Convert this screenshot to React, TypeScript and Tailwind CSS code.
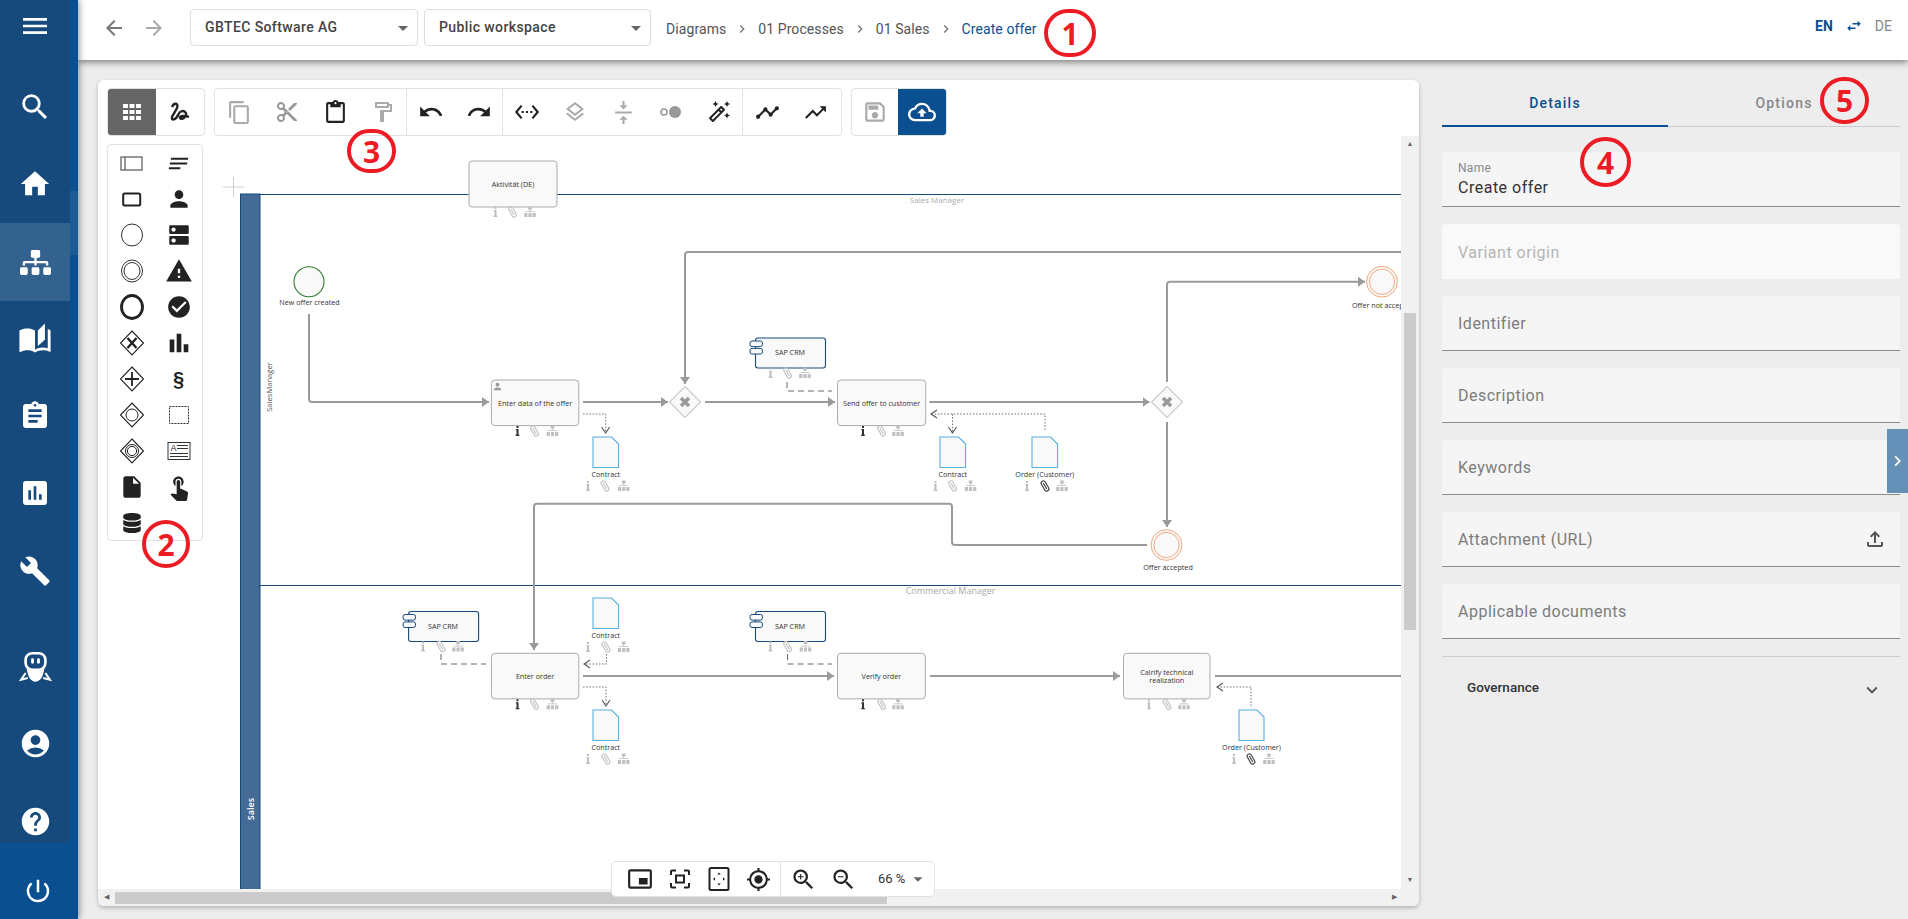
import type { ReactNode } from "react"
import {
  MdAccountCircle,
  MdArrowBack,
  MdArrowDropDown,
  MdArrowForward,
  MdAssessment,
  MdAssignment,
  MdAutoStories,
  MdBarChart,
  MdBuild,
  MdCheckCircle,
  MdChevronRight,
  MdContentCopy,
  MdContentCut,
  MdDns,
  MdExpandMore,
  MdHelp,
  MdHome,
  MdInsertDriveFile,
  MdMenu,
  MdMyLocation,
  MdNotes,
  MdOutlineAutoFixHigh,
  MdOutlineCloudUpload,
  MdOutlineContentPaste,
  MdOutlineFileUpload,
  MdOutlineFormatPaint,
  MdOutlineLayers,
  MdOutlineSave,
  MdPerson,
  MdPictureInPictureAlt,
  MdPowerSettingsNew,
  MdRedo,
  MdSearch,
  MdSettingsEthernet,
  MdSwapHoriz,
  MdTimeline,
  MdTouchApp,
  MdTrendingUp,
  MdUndo,
  MdVerticalAlignCenter,
  MdWarning,
  MdZoomIn,
  MdZoomOut,
} from "react-icons/md"
import { FaDatabase, FaSitemap } from "react-icons/fa"

const GRAY = "#9a9a9a"
const NAVY = "#174a7c"
const DOC = "#5aaee0"
const LABEL = "#333333"

function RobotIcon() {
  return (
    <svg width="33" height="33" viewBox="0 0 30 30" fill="none">
      <rect x="6" y="2" width="18" height="15" rx="6" stroke="white" strokeWidth="2.4" />
      <rect x="11" y="6.500" width="2.6" height="5" rx="1.2" fill="white" />
      <rect x="16.4" y="6.500" width="2.6" height="5" rx="1.2" fill="white" />
      <path d="M7 16 C8 24 11 28 15 28 C19 28 22 24 23 16 C20 19 10 19 7 16Z" fill="white" />
      <path d="M6 20 L2 26 L8 24.5M24 20 L28 26 L22 24.5" stroke="white" strokeWidth="1.8" />
    </svg>
  )
}

function TogglePair() {
  return (
    <svg width="26" height="24" viewBox="0 0 26 24">
      <circle cx="6" cy="12" r="3" fill="none" stroke="#999" strokeWidth="1.6" />
      <circle cx="17" cy="12" r="6" fill="#999" />
    </svg>
  )
}

function FitSelection() {
  return (
    <svg width="24" height="24" viewBox="0 0 24 24" fill="none" stroke="#222" strokeWidth="2">
      <path d="M3 8V4.500Q3 3.500 4 3.500H8M16 3.500H20Q21 3.500 21 4.500V8M21 16V19.500Q21 20.500 20 20.500H16M8 20.500H4Q3 20.500 3 19.500V16" />
      <rect x="8" y="8.500" width="8" height="7" />
    </svg>
  )
}

function FitPage() {
  return (
    <svg width="24" height="26" viewBox="0 0 24 26" fill="none">
      <rect x="2.500" y="2" width="19" height="22" rx="1.5" stroke="#222" strokeWidth="2" />
      <path d="M12 6.500L13.800 8.500H10.200ZM12 19.500L13.800 17.500H10.200ZM6 13L8 11.200V14.800ZM18 13L16 11.200V14.800Z" fill="#222" />
    </svg>
  )
}

function PaletteGlyph({ children }: { children: ReactNode }) {
  return (
    <svg width="26" height="30" viewBox="0 0 26 30" fill="none" stroke="#222">
      {children}
    </svg>
  )
}

const diamond = "M13 3 L24.5 15 L13 27 L1.5 15Z"

const paletteItems: ReactNode[] = [
  <svg key="pool" width="23" height="15" viewBox="0 0 23 15" fill="none">
    <rect x="1" y="1" width="21" height="13" stroke="#555" strokeWidth="1.2" />
    <path d="M5 1V14" stroke="#555" strokeWidth="1.2" />
  </svg>,
  <MdNotes key="notes" size={23} color="#222" className="-skew-x-12" />,
  <svg key="task" width="20" height="15" viewBox="0 0 20 15" fill="none">
    <rect x="1.2" y="1.5" width="17" height="12" rx="1.5" stroke="#222" strokeWidth="2" />
  </svg>,
  <MdPerson key="person" size={26} color="#222" />,
  <svg key="start" width="24" height="26" viewBox="0 0 24 26" fill="none">
    <ellipse cx="12" cy="13" rx="10.5" ry="11" stroke="#333" strokeWidth="1" />
  </svg>,
  <MdDns key="dns" size={26} color="#222" />,
  <svg key="inter" width="24" height="26" viewBox="0 0 24 26" fill="none">
    <ellipse cx="12" cy="13" rx="10.5" ry="11" stroke="#333" strokeWidth="1" />
    <ellipse cx="12" cy="13" rx="8" ry="8.5" stroke="#333" strokeWidth="1" />
  </svg>,
  <MdWarning key="warn" size={28} color="#222" />,
  <svg key="end" width="26" height="28" viewBox="0 0 26 28" fill="none">
    <ellipse cx="13" cy="14" rx="10.5" ry="11.5" stroke="#222" strokeWidth="2.8" />
  </svg>,
  <MdCheckCircle key="check" size={26} color="#222" />,
  <PaletteGlyph key="gw-x">
    <path d={diamond} strokeWidth="1.1" />
    <path d="M8.500 10 L17.500 20M17.500 10 L8.500 20" strokeWidth="2.4" />
  </PaletteGlyph>,
  <MdBarChart key="bars" size={28} color="#222" />,
  <PaletteGlyph key="gw-plus">
    <path d={diamond} strokeWidth="1.1" />
    <path d="M13 8V22M6 15H20" strokeWidth="1.8" />
  </PaletteGlyph>,
  <span key="para" className="font-['Liberation_Sans',sans-serif] text-[20px] font-bold text-[#222]">
    §
  </span>,
  <PaletteGlyph key="gw-o">
    <path d={diamond} strokeWidth="1.1" />
    <circle cx="13" cy="15" r="6" strokeWidth="1" />
  </PaletteGlyph>,
  <svg key="group" width="22" height="20" viewBox="0 0 22 20" fill="none">
    <rect x="1.5" y="1.5" width="19" height="17" stroke="#333" strokeWidth="1" strokeDasharray="2 1" />
  </svg>,
  <PaletteGlyph key="gw-oo">
    <path d={diamond} strokeWidth="1.1" />
    <circle cx="13" cy="15" r="6.5" strokeWidth="1" />
    <circle cx="13" cy="15" r="4.6" strokeWidth="1" />
  </PaletteGlyph>,
  <svg key="text" width="24" height="20" viewBox="0 0 24 20" fill="none">
    <rect x="1" y="1.5" width="22" height="17" stroke="#333" strokeWidth="1" />
    <text x="3.5" y="10" fontSize="9" fill="#222" fontFamily="Liberation Sans, sans-serif">
      A
    </text>
    <path d="M10 4.5H21M10 7.5H21M3 12.5H21M3 15.5H21" stroke="#333" strokeWidth="1" />
  </svg>,
  <MdInsertDriveFile key="file" size={26} color="#222" />,
  <MdTouchApp key="touch" size={28} color="#222" />,
  <FaDatabase key="db" size={20} color="#222" />,
]

type ToolProps = { icon: ReactNode; sep?: boolean }

function Tool({ icon, sep }: ToolProps) {
  return (
    <div className={`w-[48px] h-full flex items-center justify-center ${sep ? "border-r border-[#e2e2e2]" : ""}`}>
      {icon}
    </div>
  )
}

function Arrow({ id, color, open }: { id: string; color: string; open?: boolean }) {
  return (
    <marker id={id} markerUnits="userSpaceOnUse" markerWidth="12" markerHeight="12" refX="7" refY="5" orient="auto">
      {open ? (
        <path d="M1 1 L7 5 L1 9" fill="none" stroke={color} strokeWidth="1.1" />
      ) : (
        <path d="M0 0 L7 5 L0 10Z" fill={color} />
      )}
    </marker>
  )
}

function Mini({ x, y, dark }: { x: number; y: number; dark?: boolean }) {
  // clip-style glyph under a node
  return (
    <g transform={`translate(${x} ${y}) rotate(-30)`} fill="none" stroke={dark ? "#444" : "#c4c4c4"} strokeWidth="1.2">
      <rect x="-2.2" y="-5.5" width="4.4" height="11" rx="2.2" />
      <path d="M0 -3.500V3.500" />
    </g>
  )
}

function InfoGlyph({ x, y, dark }: { x: number; y: number; dark?: boolean }) {
  const c = dark ? "#333" : "#bdbdbd"
  return (
    <g fill={c}>
      <rect x={x - 1} y={y - 5} width="2" height="2" />
      <path d={`M${x - 1.6} ${y - 2}H${x + 1}V${y + 3.6}H${x + 1.8}V${y + 5}H${x - 1.8}V${y + 3.6}H${x - 1}V${y - 0.8}H${x - 1.6}Z`} />
    </g>
  )
}

function TreeGlyph({ x, y }: { x: number; y: number }) {
  return (
    <g fill="#c0c0c0">
      <rect x={x - 1.8} y={y - 5.5} width="3.6" height="3.2" />
      <rect x={x - 0.4} y={y - 2.5} width="0.8" height="2" />
      <rect x={x - 4.6} y={y - 0.8} width="9.2" height="0.8" />
      <rect x={x - 5.8} y={y + 1} width="3.2" height="4" />
      <rect x={x - 1.6} y={y + 1} width="3.2" height="4" />
      <rect x={x + 2.6} y={y + 1} width="3.2" height="4" />
    </g>
  )
}

function Minis({ a, b, c, y, infoDark, clipDark }: { a: number; b: number; c: number; y: number; infoDark?: boolean; clipDark?: boolean }) {
  return (
    <g>
      <InfoGlyph x={a} y={y} dark={infoDark} />
      <Mini x={b} y={y} dark={clipDark} />
      <TreeGlyph x={c} y={y} />
    </g>
  )
}

function Label({ x, y, children, size = 7.2, color = LABEL }: { x: number; y: number; children: string; size?: number; color?: string }) {
  return (
    <text x={x} y={y} fontSize={size} fill={color} textAnchor="middle" dominantBaseline="central" fontFamily="Open Sans, sans-serif">
      {children}
    </text>
  )
}

function Task({ x, y, w, lines, mini, infoDark = true }: { x: number; y: number; w: number; lines: string[]; mini: [number, number, number]; infoDark?: boolean }) {
  const cx = x + w / 2
  const cy = y + 23
  return (
    <g>
      <rect x={x} y={y} width={w} height="45.6" rx="3.5" fill="#f9f9f9" stroke="#ababab" strokeWidth="1" />
      {lines.length === 1 ? (
        <Label x={cx} y={cy}>
          {lines[0]}
        </Label>
      ) : (
        <>
          <Label x={cx} y={cy - 4.5}>
            {lines[0]}
          </Label>
          <Label x={cx} y={cy + 3.5}>
            {lines[1]}
          </Label>
        </>
      )}
      <Minis a={mini[0]} b={mini[1]} c={mini[2]} y={y + 51} infoDark={infoDark} />
    </g>
  )
}

function SapBox({ x, y, textX, mini }: { x: number; y: number; textX: number; mini: [number, number, number] }) {
  return (
    <g>
      <rect x={x} y={y} width="70" height="30" rx="2.5" fill="#f9f9f9" stroke={NAVY} strokeWidth="1.1" />
      <rect x={x - 5.5} y={y + 3} width="12.4" height="5.6" rx="2" fill="#f9f9f9" stroke={NAVY} strokeWidth="1" />
      <rect x={x - 5.5} y={y + 10.4} width="12.4" height="5.6" rx="2" fill="#f9f9f9" stroke={NAVY} strokeWidth="1" />
      <Label x={textX} y={y + 14}>
        SAP CRM
      </Label>
      <Minis a={mini[0]} b={mini[1]} c={mini[2]} y={y + 35} />
    </g>
  )
}

function Doc({ x, y, w = 25.6, label, mini, clipDark }: { x: number; y: number; w?: number; label: string; mini: [number, number, number]; clipDark?: boolean }) {
  return (
    <g>
      <path d={`M${x} ${y}H${x + w - 7}L${x + w} ${y + 7}V${y + 30.5}H${x}Z`} fill="#f9f9f9" stroke={DOC} strokeWidth="1.1" />
      <Label x={x + w / 2} y={y + 36.6}>
        {label}
      </Label>
      <Minis a={mini[0]} b={mini[1]} c={mini[2]} y={y + 49} clipDark={clipDark} />
    </g>
  )
}

function Gateway({ cx, cy }: { cx: number; cy: number }) {
  return (
    <g>
      <path d={`M${cx} ${cy - 15.5}L${cx + 15.5} ${cy}L${cx} ${cy + 15.5}L${cx - 15.5} ${cy}Z`} fill="#f9f9f9" stroke="#ababab" strokeWidth="1" />
      <path d={`M${cx - 4} ${cy - 4}L${cx + 4} ${cy + 4}M${cx + 4} ${cy - 4}L${cx - 4} ${cy + 4}`} stroke="#999" strokeWidth="3.4" />
    </g>
  )
}

function EndEvent({ cx, cy }: { cx: number; cy: number }) {
  return (
    <g fill="#f9f9f9" stroke="#f4a77c" strokeWidth="1">
      <circle cx={cx} cy={cy} r="15.4" />
      <circle cx={cx} cy={cy} r="12.6" />
    </g>
  )
}

function Flow({ d, arrow = true }: { d: string; arrow?: boolean }) {
  return <path d={d} fill="none" stroke={GRAY} strokeWidth="2" markerEnd={arrow ? "url(#flow)" : undefined} />
}

function Dotted({ d, end = true }: { d: string; end?: boolean }) {
  return <path d={d} fill="none" stroke="#666" strokeWidth="0.9" strokeDasharray="1.6 1.6" markerEnd={end ? "url(#open)" : undefined} />
}

function Dashed({ d }: { d: string }) {
  return <path d={d} fill="none" stroke="#666" strokeWidth="1" strokeDasharray="6 4" />
}

function Diagram() {
  return (
    <svg viewBox="204 136 1197 753" width="1197" height="753" className="block shrink-0">
      <defs>
        <Arrow id="flow" color={GRAY} />
        <Arrow id="open" color="#555" open />
      </defs>

      {/* crosshair */}
      <path d="M233.5 177V197M223 187H244" stroke="#cfcfcf" strokeWidth="1" />

      {/* pool and lanes */}
      <rect x="240.5" y="194" width="19.5" height="700" fill="#446b96" stroke={NAVY} strokeWidth="1" />
      <path d="M260 194.5H1401M260 585.5H1401" stroke={NAVY} strokeWidth="1.2" />
      <Label x={937} y={199} size={8} color="#aaaaaa">
        Sales Manager
      </Label>
      <Label x={950.6} y={590} size={9} color="#aaaaaa">
        Commercial Manager
      </Label>
      <g transform="translate(268.5 387) rotate(-90)">
        <Label x={0} y={0} size={7.6} color="#555555">
          SalesManager
        </Label>
      </g>
      <g transform="translate(250 809) rotate(-90)">
        <text textAnchor="middle" dominantBaseline="central" fontSize="9" fontWeight="600" fill="white" fontFamily="Open Sans, sans-serif">
          Sales
        </text>
      </g>

      {/* floating activity */}
      <rect x="469" y="161" width="88" height="46" rx="3" fill="#f9f9f9" stroke="#ababab" strokeWidth="1" />
      <Label x={513} y={184}>
        Aktivität (DE)
      </Label>
      <Minis a={495.5} b={512.5} c={530} y={212} />

      {/* flows */}
      <Flow d="M309 314V399Q309 402 312 402H489" />
      <Flow d="M583 402H668" />
      <Flow d="M705 402H835" />
      <Flow d="M929.5 402H1149.5" />
      <Flow d="M1401 252H688Q685 252 685 255V384" />
      <Flow d="M1167 382V284.5Q1167 281.7 1170 281.7H1365" />
      <Flow d="M1167 422V527" />
      <Flow d="M1147 545H955Q952 545 952 542V506.7Q952 503.7 949 503.7H537Q534 503.7 534 506.7V650" />
      <Flow d="M583 676H834" />
      <Flow d="M930 676H1120" />
      <Flow d="M1215 676H1401" arrow={false} />

      {/* dotted and dashed associations */}
      <Dotted d="M583 414H605.7V433" />
      <Dotted d="M1045 430V414H931" />
      <Dotted d="M952.5 414V433" />
      <Dotted d="M606.5 654V664H584" />
      <Dotted d="M583 687H606V706" />
      <Dotted d="M1251 706V687H1217" />
      <Dashed d="M787 382V391H832" />
      <Dashed d="M441 654V664H486" />
      <Dashed d="M787.6 654V664H832" />

      {/* first lane */}
      <ellipse cx="309" cy="281.7" rx="15" ry="15" fill="#f9f9f9" stroke="#2e7d32" strokeWidth="1.1" />
      <Label x={309.5} y={302}>
        New offer created
      </Label>

      <Task x={491.4} y={380} w={87.4} lines={["Enter data of the offer"]} mini={[517.5, 534.5, 552.5]} />
      <MdPerson x={492} y={381} size={11} color="#999" />
      <Gateway cx={685} cy={402} />
      <SapBox x={755.5} y={338} textX={790} mini={[770.6, 787.6, 805]} />
      <Task x={837.5} y={380} w={88.2} lines={["Send offer to customer"]} mini={[863, 881.6, 898]} />
      <Gateway cx={1167} cy={402} />
      <EndEvent cx={1382} cy={281.7} />
      <text x={1352} y={305} fontSize="7.2" fill={LABEL} dominantBaseline="central" fontFamily="Open Sans, sans-serif">
        Offer not accepted
      </text>
      <EndEvent cx={1166.5} cy={545} />
      <Label x={1168} y={566.7}>
        Offer accepted
      </Label>
      <Doc x={593} y={437} label="Contract" mini={[588, 605, 623.7]} />
      <Doc x={940} y={437} label="Contract" mini={[935.5, 952.6, 970.6]} />
      <Doc x={1032} y={437} label="Order (Customer)" mini={[1027, 1045, 1062]} clipDark />

      {/* second lane */}
      <SapBox x={408.6} y={611.5} textX={443} mini={[423, 441, 458]} />
      <Doc x={593} y={598} label="Contract" mini={[588, 606, 623.7]} />
      <Task x={491.4} y={653.3} w={87.4} lines={["Enter order"]} mini={[517.5, 534.5, 552.5]} />
      <Doc x={593} y={710} label="Contract" mini={[588, 606, 623.7]} />
      <SapBox x={755.5} y={611.5} textX={790} mini={[770.5, 787.6, 805.5]} />
      <Task x={837.5} y={653.3} w={87.8} lines={["Verify order"]} mini={[863, 881.6, 898]} />
      <Task x={1123.5} y={653.3} w={86.5} lines={["Calrify technical", "realization"]} mini={[1149, 1167, 1184]} infoDark={false} />
      <Doc x={1239} y={710} w={25} label="Order (Customer)" mini={[1234, 1251, 1269]} clipDark />
    </svg>
  )
}

function Field({ label, value, disabled, icon }: { label: string; value?: string; disabled?: boolean; icon?: ReactNode }) {
  return (
    <div
      className={`h-[55px] mb-[17px] rounded-t-[4px] px-4 flex items-center justify-between ${
        disabled ? "bg-[#f9f9f9]" : "bg-[#f5f5f5] border-b border-[#8a8a8a]"
      }`}
    >
      {value ? (
        <div className="flex flex-col">
          <span className="text-[12px] leading-[14px] tracking-[0.3px] text-[#8a8a8a]">{label}</span>
          <span className="text-[16px] leading-[20px] mt-[3px] tracking-[0.5px] text-[#333]">{value}</span>
        </div>
      ) : (
        <span className={`pt-[2px] text-[16px] tracking-[0.5px] ${disabled ? "text-[#b5b5b5]" : "text-[#7c7c7c]"}`}>{label}</span>
      )}
      {icon}
    </div>
  )
}

export default function App() {
  return (
    <div className="relative w-[1908px] h-[919px] overflow-hidden flex bg-[#ededed] font-['Roboto',sans-serif]">
      {/* Sidebar */}
      <aside className="relative z-20 w-[78px] shrink-0 flex flex-col bg-[#0a4f8f] shadow-[2px_0_6px_rgba(0,0,0,0.35)]">
        <div className="absolute left-[70px] top-[191px] w-[8px] h-[64px] bg-[#1c5b96]" />
        <div className="w-[70px] h-[843px] bg-[#174a7c] flex flex-col text-white">
          <div className="h-[52px] flex items-center justify-center">
            <MdMenu size={32} />
          </div>
          <div className="h-[16px]" />
          <div className="h-[77px] flex items-center justify-center">
            <MdSearch size={34} />
          </div>
          <div className="h-[78px] flex items-center justify-center">
            <MdHome size={34} />
          </div>
          <div className="h-[78px] bg-[#34628f] flex items-center justify-center">
            <FaSitemap size={31} />
          </div>
          <div className="h-[76px] flex items-center justify-center">
            <MdAutoStories size={34} />
          </div>
          <div className="h-[77px] flex items-center justify-center">
            <MdAssignment size={32} />
          </div>
          <div className="h-[77px] flex items-center justify-center">
            <MdAssessment size={32} />
          </div>
          <div className="h-[79px] flex items-center justify-center">
            <MdBuild size={32} />
          </div>
          <div className="h-[20px]" />
          <div className="h-[74px] flex items-center justify-center">
            <RobotIcon />
          </div>
          <div className="h-[78px] flex items-center justify-center">
            <MdAccountCircle size={33} />
          </div>
          <div className="h-[60px] pt-[23px] flex justify-center">
            <MdHelp size={33} />
          </div>
        </div>
        <div className="flex-1 flex items-center pl-[23px] pt-[20px] text-white">
          <MdPowerSettingsNew size={30} />
        </div>
      </aside>

      <div className="flex-1 flex flex-col min-w-0">
        {/* Header */}
        <header className="relative z-10 h-[60px] shrink-0 bg-white flex items-center pl-[24px] pb-[5px] pr-[16px] shadow-[0_2px_7px_rgba(0,0,0,0.5)]">
          <MdArrowBack size={24} className="text-[#777]" />
          <MdArrowForward size={24} className="ml-[16px] text-[#aaa]" />
          <div className="ml-[24px] w-[228px] h-[37px] rounded-[4px] border border-[#dedede] flex items-center justify-between pl-[14px] pr-[2px]">
            <span className="text-[14px] font-medium tracking-[0.4px] text-[#444]">GBTEC Software AG</span>
            <MdArrowDropDown size={24} className="text-[#666]" />
          </div>
          <div className="ml-[6px] w-[227px] h-[37px] rounded-[4px] border border-[#dedede] flex items-center justify-between pl-[14px] pr-[2px]">
            <span className="text-[14px] font-medium tracking-[0.4px] text-[#444]">Public workspace</span>
            <MdArrowDropDown size={24} className="text-[#666]" />
          </div>
          <nav className="ml-[15px] mt-[3px] flex items-center gap-[8px] text-[14px] tracking-[0.08px] text-[#555]">
            <span>Diagrams</span>
            <MdChevronRight size={16} className="text-[#777]" />
            <span>01 Processes</span>
            <MdChevronRight size={16} className="text-[#777]" />
            <span>01 Sales</span>
            <MdChevronRight size={16} className="text-[#777]" />
            <span className="text-[#0a4f8f]">Create offer</span>
          </nav>
          <div className="ml-auto flex items-center text-[14px] mt-[-3px]">
            <span className="font-bold text-[#0a4f8f]">EN</span>
            <MdSwapHoriz size={18} className="mx-[12px] text-[#0a4f8f]" />
            <span className="text-[#888]">DE</span>
          </div>
        </header>

        <div className="flex-1 flex pt-[20px] pl-[20px] min-h-0">
          {/* Canvas card */}
          <section className="relative w-[1321px] h-[826px] shrink-0 bg-white rounded-[6px] shadow-[0_2px_4px_rgba(0,0,0,0.25)] flex flex-col overflow-hidden">
            <div className="h-[56px] shrink-0 pl-[9px] pt-[8px] flex gap-[9px]">
              <div className="w-[98px] h-[48px] rounded-[4px] border border-[#e2e2e2] flex overflow-hidden">
                <div className="w-[48px] bg-[#666666] flex items-center justify-center">
                  <svg width="20" height="20" viewBox="0 0 20 20" fill="white">
                    <path d="M1 2h5v4H1zM7.500 2h5v4h-5zM14 2h5v4h-5zM1 8h5v4H1zM7.500 8h5v4h-5zM14 8h5v4h-5zM1 14h5v4H1zM7.500 14h5v4h-5zM14 14h5v4h-5z" />
                  </svg>
                </div>
                <div className="flex-1 flex items-center justify-center">
                  <svg width="22" height="24" viewBox="0 0 22 24" fill="none" stroke="#222" strokeWidth="2.4">
                    <path d="M3 7C5 2 10 3 8 8L3 17C2 21 7 20 9 15C11 11 14 10 16 12C20 15 13 21 11 18C10 15 18 16 20 17" />
                  </svg>
                </div>
              </div>
              <div className="w-[628px] h-[48px] rounded-[4px] border border-[#e2e2e2] flex">
                <Tool icon={<MdContentCopy size={25} className="text-[#aaa]" />} />
                <Tool icon={<MdContentCut size={24} className="text-[#999]" />} />
                <Tool icon={<MdOutlineContentPaste size={25} className="text-[#222]" />} />
                <Tool sep icon={<MdOutlineFormatPaint size={24} className="text-[#aaa]" />} />
                <Tool icon={<MdUndo size={26} className="text-[#222]" />} />
                <Tool sep icon={<MdRedo size={26} className="text-[#222]" />} />
                <Tool icon={<MdSettingsEthernet size={26} className="text-[#222]" />} />
                <Tool icon={<MdOutlineLayers size={24} className="text-[#aaa]" />} />
                <Tool icon={<MdVerticalAlignCenter size={25} className="text-[#aaa]" />} />
                <Tool icon={<TogglePair />} />
                <Tool sep icon={<MdOutlineAutoFixHigh size={24} className="text-[#222]" />} />
                <Tool icon={<MdTimeline size={25} className="text-[#222]" />} />
                <Tool icon={<MdTrendingUp size={25} className="text-[#222]" />} />
              </div>
              <div className="w-[96px] h-[48px] rounded-[4px] border border-[#e2e2e2] flex overflow-hidden">
                <div className="flex-1 flex items-center justify-center">
                  <MdOutlineSave size={26} className="text-[#aaa]" />
                </div>
                <div className="w-[48px] bg-[#0a4f8f] flex items-center justify-center">
                  <MdOutlineCloudUpload size={28} className="text-white" />
                </div>
              </div>
            </div>

            <div className="flex flex-1 min-h-0">
              <div className="w-[106px] shrink-0 pl-[9px] pt-[8px]">
                <div className="w-[96px] h-[397px] rounded-[4px] border border-[#e2e2e2] grid grid-cols-2 auto-rows-[36px]">
                  {paletteItems.map((item, i) => (
                    <div key={i} className="flex items-center justify-center">
                      {item}
                    </div>
                  ))}
                </div>
              </div>
              <div className="flex-1 overflow-hidden">
                <Diagram />
              </div>
              {/* vertical scrollbar */}
              <div className="w-[18px] shrink-0 bg-[#f1f1f1] flex flex-col items-center">
                <div className="h-[17px] flex items-center justify-center text-[7px] text-[#666]">▲</div>
                <div className="mt-[160px] w-[12px] h-[317px] bg-[#cbcbcb]" />
                <div className="mt-auto h-[17px] flex items-center justify-center text-[7px] text-[#666]">▼</div>
              </div>
            </div>

            {/* horizontal scrollbar */}
            <div className="h-[17px] shrink-0 bg-[#f1f1f1] flex items-center">
              <div className="w-[17px] flex justify-center text-[7px] text-[#666]">◀</div>
              <div className="w-[772px] h-[12px] bg-[#cbcbcb]" />
              <div className="ml-auto w-[44px] pr-[22px] flex justify-end text-[7px] text-[#666]">▶</div>
            </div>

            {/* zoom bar over the canvas */}
            <div className="absolute left-[513px] top-[781px] w-[324px] h-[36px] bg-white rounded-[5px] border border-[#e2e2e2] flex items-center">
              <div className="w-[169px] h-full flex items-center justify-around pl-[8px] pr-[2px] border-r border-[#e2e2e2] text-[#222]">
                <MdPictureInPictureAlt size={26} />
                <FitSelection />
                <FitPage />
                <MdMyLocation size={25} />
              </div>
              <MdZoomIn size={27} className="ml-[9px] text-[#222]" />
              <MdZoomOut size={27} className="ml-[13px] text-[#222]" />
              <span className="ml-[21px] text-[13px] text-[#333]">66 %</span>
              <MdArrowDropDown size={22} className="ml-[2px] text-[#666]" />
            </div>
          </section>

          {/* Right panel */}
          <aside className="ml-[23px] w-[458px] shrink-0 flex flex-col">
            <div className="h-[47px] shrink-0 flex border-b border-[#cccccc]">
              <div className="relative w-[226px] flex items-center justify-center text-[14px] font-medium tracking-[1.2px] text-[#0a4f8f]">
                Details
                <div className="absolute left-0 right-0 bottom-[-1px] h-[2px] bg-[#0a4f8f]" />
              </div>
              <div className="flex-1 flex items-center justify-center text-[14px] font-medium tracking-[1.2px] text-[#888]">
                Options
              </div>
            </div>
            <div className="mt-[25px]">
              <Field label="Name" value="Create offer" />
              <Field label="Variant origin" disabled />
              <Field label="Identifier" />
              <Field label="Description" />
              <Field label="Keywords" />
              <Field label="Attachment (URL)" icon={<MdOutlineFileUpload size={24} className="text-[#555] -mr-[3px]" />} />
              <Field label="Applicable documents" />
            </div>
            <div className="border-t border-[#cccccc] h-[62px] flex items-center justify-between pl-[25px] pr-[17px]">
              <span className="text-[13.500px] font-medium text-[#333]">Governance</span>
              <MdExpandMore size={22} className="mt-[5px] text-[#555]" />
            </div>
          </aside>
        </div>
      </div>

      {/* panel collapse tab */}
      <div className="absolute z-30 left-[1887px] top-[429px] w-[21px] h-[64px] bg-[#6591b9] flex items-center justify-center text-white">
        <MdChevronRight size={24} />
      </div>

      {/* numbered callouts */}
      <div className="absolute z-30 left-[1044px] top-[9px] w-[52px] h-[48px] rounded-full border-[4px] border-[#ed1c24] flex items-center justify-center text-[#ed1c24] text-[30px] font-bold font-['Open_Sans',sans-serif]">
        1
      </div>
      <div className="absolute z-30 left-[142px] top-[520px] w-[48px] h-[48px] rounded-full border-[4px] border-[#ed1c24] flex items-center justify-center text-[#ed1c24] text-[30px] font-bold font-['Open_Sans',sans-serif]">
        2
      </div>
      <div className="absolute z-30 left-[347px] top-[129px] w-[49px] h-[44px] rounded-full border-[4px] border-[#ed1c24] flex items-center justify-center text-[#ed1c24] text-[30px] font-bold font-['Open_Sans',sans-serif]">
        3
      </div>
      <div className="absolute z-30 left-[1580px] top-[137px] w-[51px] h-[50px] rounded-full border-[4px] border-[#ed1c24] flex items-center justify-center text-[#ed1c24] text-[30px] font-bold font-['Open_Sans',sans-serif]">
        4
      </div>
      <div className="absolute z-30 left-[1820px] top-[77px] w-[49px] h-[47px] rounded-full border-[4px] border-[#ed1c24] flex items-center justify-center text-[#ed1c24] text-[30px] font-bold font-['Open_Sans',sans-serif]">
        5
      </div>
    </div>
  )
}
